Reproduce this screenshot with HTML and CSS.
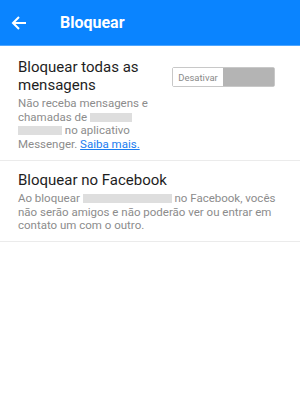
FILE: index.html
```html
<!DOCTYPE html>
<html lang="pt">
<head>
    <meta charset="UTF-8">
    <meta name="viewport" content="width=device-width, initial-scale=1.0">
    <title>Bloquear</title>
    <link rel="stylesheet" href="styles.css">
</head>
<body>
    <div class="header">
        <svg class="back-icon" width="16" height="16" viewBox="0 0 16 16">
            <path d="M15 8H2M8 2L2 8l6 6" fill="none" stroke="#fff" stroke-width="2"/>
        </svg>
        <div class="header-title">Bloquear</div>
    </div>

    <div class="section section-first">
        <div class="section-text">
            <div class="section-title">Bloquear todas as mensagens</div>
            <div class="section-desc">
                Não receba mensagens e chamadas de <span class="blur blur-a"></span>
                <span class="blur blur-b"></span> no aplicativo Messenger. <a href="#" class="link">Saiba mais.</a>
            </div>
        </div>
        <div class="toggle">
            <div class="toggle-label">Desativar</div>
            <div class="toggle-fill"></div>
        </div>
    </div>

    <div class="section section-last">
        <div class="section-text">
            <div class="section-title">Bloquear no Facebook</div>
            <div class="section-desc">
                Ao bloquear <span class="blur blur-c"></span> no Facebook, vocês não serão amigos e não poderão ver ou entrar em contato um com o outro.
            </div>
        </div>
    </div>
</body>
</html>
```

FILE: styles.css
```css
* {
    margin: 0;
    padding: 0;
    box-sizing: border-box;
}

body {
    font-family: Roboto, "Liberation Sans", sans-serif;
    background: #fff;
    width: 300px;
    height: 420px;
}

.header {
    height: 46px;
    background-color: #0a84ff;
    border-bottom: 1px solid #4ea6ff;
    display: flex;
    align-items: center;
    padding-left: 11px;
    color: white;
}

.back-icon {
    display: block;
}

.header-title {
    font-size: 16px;
    font-weight: bold;
    margin-left: 33px;
    margin-top: -1px;
}

.section {
    display: flex;
    align-items: flex-start;
    padding: 12px 18px 9px 18px;
    border-bottom: 1px solid #ebebeb;
}

.section-first {
    padding-right: 25px;
}

.section-last {
    padding-top: 10px;
    padding-bottom: 8px;
}

.section-text {
    flex: 1;
}

.section-title {
    font-size: 15px;
    line-height: 18px;
    color: #1e1e1e;
    margin-bottom: 3px;
}

.section-desc {
    font-size: 11.5px;
    line-height: 13.5px;
    color: #8c8c8c;
}

.blur {
    display: inline-block;
    height: 9px;
    background-color: #dedede;
    vertical-align: -1px;
}

.blur-a {
    width: 42px;
}

.blur-b {
    width: 44px;
}

.blur-c {
    width: 89px;
}

.link {
    color: #1a7cf0;
}

.toggle {
    display: flex;
    width: 103px;
    height: 20px;
    margin-top: 9px;
    margin-left: 6px;
    border: 1px solid #c8c8c8;
    border-radius: 2px;
}

.toggle-label {
    width: 50px;
    font-size: 9.5px;
    color: #8a8a8a;
    display: flex;
    align-items: center;
    justify-content: center;
    background: #fff;
}

.toggle-fill {
    flex: 1;
    background-color: #b4b4b4;
}
```
